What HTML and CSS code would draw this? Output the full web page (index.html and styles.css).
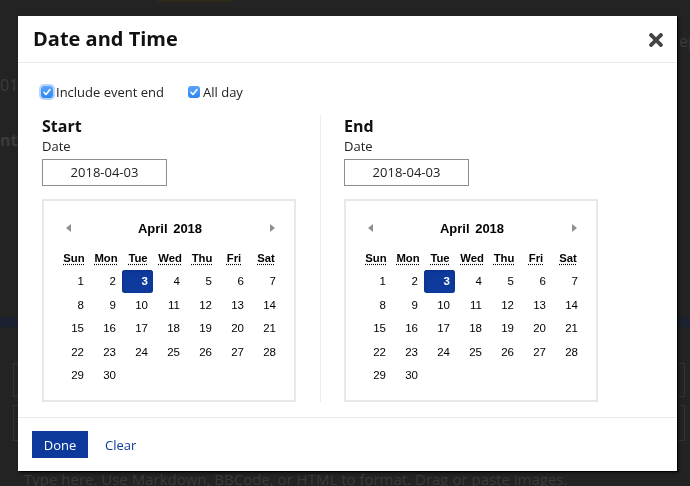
FILE: index.html
```html
<!DOCTYPE html>
<html>
<head>
<meta charset="utf-8">
<link rel="stylesheet" href="styles.css">
</head>
<body>
<div class="page">
  <div class="strip"></div>
  <div class="bg-row bg-right">ep</div>
  <div class="bg-row bg-num">01</div>
  <div class="bg-row bg-bold">nts</div>
  <div class="bg-bar"></div>
  <div class="bg-box"></div>
  <div class="bg-box bg-box2"></div>
  <div class="bg-hint">Type here. Use Markdown, BBCode, or HTML to format. Drag or paste images.</div>
</div>

<div class="modal">
  <div class="modal-header">
    <h3 class="title">Date and Time</h3>
    <svg class="close" viewBox="0 80 352 352" width="14" height="14"><path fill="#444" d="M242.72 256l100.07-100.07c12.28-12.28 12.28-32.19 0-44.48l-22.24-22.24c-12.28-12.28-32.19-12.28-44.480 0L176 189.28 75.93 89.21c-12.28-12.28-32.19-12.28-44.48 0L9.21 111.45c-12.28 12.28-12.28 32.19 0 44.48L109.28 256 9.21 356.07c-12.28 12.28-12.28 32.19 0 44.48l22.24 22.240c12.28 12.28 32.2 12.28 44.48 0L176 322.72l100.07 100.07c12.28 12.28 32.2 12.28 44.48 0l22.24-22.24c12.28-12.28 12.28-32.19 0-44.48L242.720 256z"/></svg>
  </div>
  <div class="modal-body">
    <div class="options">
      <label class="opt"><span class="cb focus"><svg viewBox="0 0 12 12" width="12" height="12"><path d="M3 6.3l2 2.2 4-5" fill="none" stroke="#fff" stroke-width="1.6" stroke-linecap="round" stroke-linejoin="round"/></svg></span>Include event end</label>
      <label class="opt"><span class="cb"><svg viewBox="0 0 12 12" width="12" height="12"><path d="M3 6.3l2 2.2 4-5" fill="none" stroke="#fff" stroke-width="1.6" stroke-linecap="round" stroke-linejoin="round"/></svg></span>All day</label>
    </div>
    <div class="cols">
      <div class="col">
        <div class="col-title">Start</div>
        <div class="label">Date</div>
        <div class="date-input">2018-04-03</div>
        <div class="cal">
          <div class="cal-title"><span class="arrow prev"></span><span class="month">April <span class="yr">2018</span></span><span class="arrow next"></span></div>
          <table class="cal-table">
            <tr><th><abbr title="Sunday">Sun</abbr></th><th><abbr title="Monday">Mon</abbr></th><th><abbr title="Tuesday">Tue</abbr></th><th><abbr title="Wednesday">Wed</abbr></th><th><abbr title="Thursday">Thu</abbr></th><th><abbr title="Friday">Fri</abbr></th><th><abbr title="Saturday">Sat</abbr></th></tr>
            <tr><td><span class="day">1</span></td><td><span class="day">2</span></td><td><span class="day sel">3</span></td><td><span class="day">4</span></td><td><span class="day">5</span></td><td><span class="day">6</span></td><td><span class="day">7</span></td></tr>
            <tr><td><span class="day">8</span></td><td><span class="day">9</span></td><td><span class="day">10</span></td><td><span class="day">11</span></td><td><span class="day">12</span></td><td><span class="day">13</span></td><td><span class="day">14</span></td></tr>
            <tr><td><span class="day">15</span></td><td><span class="day">16</span></td><td><span class="day">17</span></td><td><span class="day">18</span></td><td><span class="day">19</span></td><td><span class="day">20</span></td><td><span class="day">21</span></td></tr>
            <tr><td><span class="day">22</span></td><td><span class="day">23</span></td><td><span class="day">24</span></td><td><span class="day">25</span></td><td><span class="day">26</span></td><td><span class="day">27</span></td><td><span class="day">28</span></td></tr>
            <tr><td><span class="day">29</span></td><td><span class="day">30</span></td><td></td><td></td><td></td><td></td><td></td></tr>
          </table>
        </div>
      </div>
      <div class="divider"></div>
      <div class="col">
        <div class="col-title">End</div>
        <div class="label">Date</div>
        <div class="date-input">2018-04-03</div>
        <div class="cal">
          <div class="cal-title"><span class="arrow prev"></span><span class="month">April <span class="yr">2018</span></span><span class="arrow next"></span></div>
          <table class="cal-table">
            <tr><th><abbr title="Sunday">Sun</abbr></th><th><abbr title="Monday">Mon</abbr></th><th><abbr title="Tuesday">Tue</abbr></th><th><abbr title="Wednesday">Wed</abbr></th><th><abbr title="Thursday">Thu</abbr></th><th><abbr title="Friday">Fri</abbr></th><th><abbr title="Saturday">Sat</abbr></th></tr>
            <tr><td><span class="day">1</span></td><td><span class="day">2</span></td><td><span class="day sel">3</span></td><td><span class="day">4</span></td><td><span class="day">5</span></td><td><span class="day">6</span></td><td><span class="day">7</span></td></tr>
            <tr><td><span class="day">8</span></td><td><span class="day">9</span></td><td><span class="day">10</span></td><td><span class="day">11</span></td><td><span class="day">12</span></td><td><span class="day">13</span></td><td><span class="day">14</span></td></tr>
            <tr><td><span class="day">15</span></td><td><span class="day">16</span></td><td><span class="day">17</span></td><td><span class="day">18</span></td><td><span class="day">19</span></td><td><span class="day">20</span></td><td><span class="day">21</span></td></tr>
            <tr><td><span class="day">22</span></td><td><span class="day">23</span></td><td><span class="day">24</span></td><td><span class="day">25</span></td><td><span class="day">26</span></td><td><span class="day">27</span></td><td><span class="day">28</span></td></tr>
            <tr><td><span class="day">29</span></td><td><span class="day">30</span></td><td></td><td></td><td></td><td></td><td></td></tr>
          </table>
        </div>
      </div>
    </div>
  </div>
  <div class="modal-footer">
    <button class="btn-done">Done</button>
    <a class="btn-clear">Clear</a>
  </div>
</div>
</body>
</html>
```

FILE: styles.css
```css
html, body {
  margin: 0;
  padding: 0;
  background: #232323;
  overflow: hidden;
}

.page {
  height: 486px;
  display: flex;
  flex-direction: column;
  font-family: "Open Sans", sans-serif;
  color: #3c3c3c;
  overflow: hidden;
}

.strip {
  margin-left: 157px;
  width: 76px;
  height: 2px;
  background: #2d2917;
  flex-shrink: 0;
}

.bg-row {
  font-size: 16px;
  line-height: 20px;
  white-space: nowrap;
  flex-shrink: 0;
}

.bg-right {
  margin-top: 29px;
  padding-left: 679px;
}

.bg-num {
  margin-top: 24px;
  padding-left: 0;
}

.bg-bold {
  margin-top: 35px;
  font-weight: bold;
}

.bg-bar {
  margin-top: 167px;
  height: 10px;
  background: #1b2130;
  flex-shrink: 0;
}

.bg-box {
  margin-top: 36px;
  margin-left: 13px;
  width: 670px;
  height: 32px;
  border: 1px solid #333;
  flex-shrink: 0;
}

.bg-box2 {
  margin-top: 8px;
  height: 34px;
}

.bg-hint {
  margin-top: 28px;
  padding-left: 24px;
  font-size: 15px;
  line-height: 20px;
  color: #3a3a3a;
  white-space: nowrap;
  flex-shrink: 0;
}

/* modal */
.modal {
  position: fixed;
  left: 18px;
  top: 16px;
  width: 659px;
  height: 455px;
  background: #fff;
  box-shadow: 1px 1px 0 #000, 2px 2px 3px rgba(0, 0, 0, 0.5);
  display: flex;
  flex-direction: column;
  font-family: "Open Sans", sans-serif;
  color: #222;
  font-size: 13px;
}

.modal-header {
  height: 47px;
  box-sizing: border-box;
  border-bottom: 1px solid #e9e9e9;
  display: flex;
  align-items: center;
  justify-content: space-between;
  padding: 0 14px 0 15px;
}

.title {
  margin: 0;
  font-size: 20px;
  font-weight: 700;
  color: #111;
  line-height: 26px;
}

.close {
  display: block;
  margin-top: 1px;
}

.modal-body {
  flex: 1;
  padding: 20px 24px 0;
}

.options {
  display: flex;
  align-items: center;
  gap: 24px;
  height: 18px;
  margin-left: -1px;
}

.opt {
  display: flex;
  align-items: center;
  gap: 3px;
  font-size: 13px;
  line-height: 18px;
  color: #222;
}

.cb {
  width: 12px;
  height: 12px;
  border-radius: 3px;
  background: linear-gradient(#5aa4fb, #2f86f2);
  display: block;
}

.cb svg {
  display: block;
}

.cb.focus {
  box-shadow: 0 0 0 2px rgba(80, 150, 250, 0.4);
}

.cols {
  display: flex;
  margin-top: 14px;
}

.col {
  width: 254px;
}

.divider {
  width: 1px;
  background: #ececec;
  margin: 0 23px 0 24px;
}

.col-title {
  font-size: 16px;
  font-weight: 700;
  line-height: 22px;
  color: #111;
}

.label {
  font-size: 13px;
  line-height: 18px;
}

.date-input {
  margin-top: 4px;
  width: 125px;
  height: 27px;
  box-sizing: border-box;
  border: 1px solid #8e8e8e;
  text-align: center;
  font-size: 13px;
  line-height: 25px;
  color: #222;
}

.cal {
  margin-top: 13px;
  width: 254px;
  height: 203px;
  box-sizing: border-box;
  border: 2px solid #e8e8e8;
  padding: 16px 0 0 14px;
  font-family: "Liberation Sans", Arial, sans-serif;
  color: #000;
}

.cal-title {
  width: 224px;
  height: 22px;
  display: flex;
  align-items: center;
  justify-content: space-between;
}

.month {
  font-size: 13px;
  font-weight: 700;
}

.yr {
  margin-left: 2px;
}

.arrow {
  width: 20px;
  height: 22px;
  display: flex;
  align-items: center;
  justify-content: center;
}

.arrow::before {
  content: "";
  display: block;
  border-top: 4px solid transparent;
  border-bottom: 4px solid transparent;
}

.prev::before {
  border-right: 5px solid #8f8f8f;
}

.next::before {
  border-left: 5px solid #8f8f8f;
}

.cal-table {
  margin-top: 7.5px;
  width: 224px;
  table-layout: fixed;
  border-collapse: collapse;
  border-spacing: 0;
}

.cal-table tr {
  height: 23.5px;
}

.cal-table th {
  font-size: 11.3px;
  font-weight: 700;
  text-align: center;
  padding: 0;
  line-height: 23px;
}

.cal-table abbr {
  text-decoration: underline dotted;
  text-underline-offset: 2px;
}

.cal-table td {
  padding: 0;
  vertical-align: top;
}

.day {
  display: block;
  width: 31px;
  height: 23px;
  box-sizing: border-box;
  padding-right: 5px;
  text-align: right;
  font-size: 11.5px;
  line-height: 23px;
}

.day.sel {
  background: #0d3a9c;
  color: #fff;
  font-weight: 700;
  border-radius: 3px;
  box-shadow: inset 0 1px 3px #0a2f80;
}

.modal-footer {
  border-top: 1px solid #e9e9e9;
  padding: 13px 14px;
  display: flex;
  align-items: center;
  height: 54px;
  box-sizing: border-box;
}

.btn-done {
  width: 56px;
  height: 27px;
  border: 0;
  background: #0c399b;
  color: #fff;
  font-family: "Open Sans", sans-serif;
  font-size: 13px;
  padding: 0;
}

.btn-clear {
  margin-left: 17px;
  color: #0c399b;
  font-size: 13px;
}
```
